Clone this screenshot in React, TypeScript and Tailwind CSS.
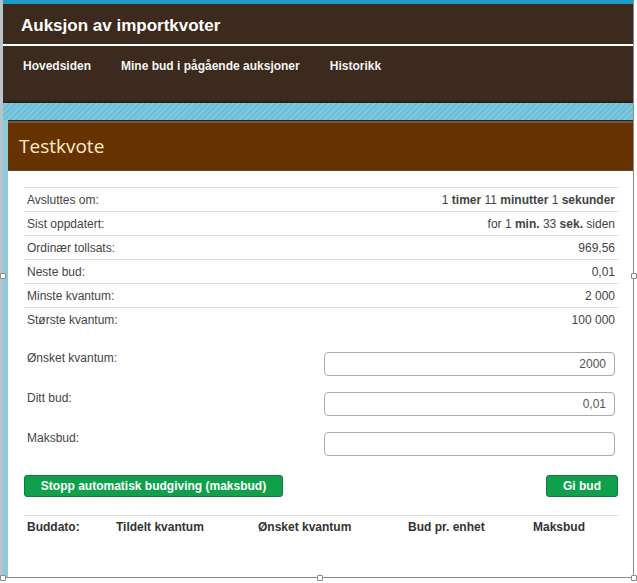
import React from "react";

const rows: { label: string; value: React.ReactNode }[] = [
  {
    label: "Avsluttes om:",
    value: (
      <>
        1 <b>timer</b> 11 <b>minutter</b> 1 <b>sekunder</b>
      </>
    ),
  },
  {
    label: "Sist oppdatert:",
    value: (
      <>
        for 1 <b>min.</b> 33 <b>sek.</b> siden
      </>
    ),
  },
  { label: "Ordinær tollsats:", value: "969,56" },
  { label: "Neste bud:", value: "0,01" },
  { label: "Minste kvantum:", value: "2 000" },
  { label: "Største kvantum:", value: "100 000" },
];

const formRows = [
  { label: "Ønsket kvantum:", value: "2000" },
  { label: "Ditt bud:", value: "0,01" },
  { label: "Maksbud:", value: "" },
];

function Handle({ cls }: { cls: string }) {
  return <div className={`absolute w-[6px] h-[6px] bg-white border border-[#8a8a8a] rounded-[1px] ${cls}`} />;
}

export default function App() {
  return (
    <div className="relative w-[637px] h-[583px] bg-white overflow-hidden font-['Liberation_Sans',Arial,sans-serif] text-[#333]">
      <div className="w-[634px] h-[578px] border-r border-b border-[#8c8c8c] border-l-[3px] border-l-[#b9c4c9] flex flex-col">
        {/* Header */}
        <div className="bg-[#3b2a1d] border-t-[4px] border-t-[#1d9dc6]">
          <div className="h-[42px] flex items-center pl-[18px] pt-[4px] border-b-2 border-white">
            <span className="text-white font-bold text-[17px]">Auksjon av importkvoter</span>
          </div>
          <div className="h-[55px] flex items-start pt-[11px] pl-[20px] gap-[30px] text-[12px] font-bold text-[#f4f4f4]">
            <span>Hovedsiden</span>
            <span>Mine bud i pågående auksjoner</span>
            <span>Historikk</span>
          </div>
        </div>
        {/* Striped band */}
        <div className="h-[2px] bg-[#2a2018]" />
        <div className="h-[17px] bg-[repeating-linear-gradient(135deg,#6cbdd6_0px,#6cbdd6_2px,#80c8de_2px,#80c8de_4px)]" />
        {/* Body */}
        <div className="flex-1 flex bg-[linear-gradient(90deg,#8cc9dc,#c6e4ee)]">
          <div className="w-[5px]" />
          <div className="flex-1 flex flex-col">
            <div className="h-[51px] bg-[#663300] border-t border-t-[#2e2218] shadow-[inset_0_2px_0_#6e5545] border-b border-b-[#5a4535] flex items-center pl-[11px] pt-[1px]">
              <span className="font-['Open_Sans',sans-serif] text-[19px] text-[#fdebd0]">Testkvote</span>
            </div>
            <div className="flex-1 bg-white pl-[16px] pr-[15px] pt-[16px]">
              {/* Info table */}
              <div className="flex flex-col text-[12px] text-[#444]">
                {rows.map((r) => (
                  <div
                    key={r.label}
                    className="h-[24px] flex items-center justify-between pl-[3px] pr-[3px] border-t border-[#dcdcdc]"
                  >
                    <span>{r.label}</span>
                    <span>{r.value}</span>
                  </div>
                ))}
              </div>
              {/* Form */}
              <div className="mt-[21px] flex flex-col gap-[16px] text-[12px] text-[#444]">
                {formRows.map((f) => (
                  <div key={f.label} className="flex h-[24px]">
                    <div className="w-[300px] pl-[3px] leading-[14px] -mt-[1px]">{f.label}</div>
                    <div className="w-[291px] h-[24px] border border-[#a9a9a9] rounded-[4px] flex items-center justify-end pr-[8px] text-[12px] text-[#555]">
                      {f.value}
                    </div>
                  </div>
                ))}
              </div>
              {/* Buttons */}
              <div className="mt-[19px] flex justify-between">
                <div className="w-[259px] h-[22px] bg-[#10a04c] border border-[#0b7d3b] rounded-[3px] flex items-center justify-center text-white font-bold text-[12px]">
                  Stopp automatisk budgiving (maksbud)
                </div>
                <div className="w-[72px] h-[22px] bg-[#10a04c] border border-[#0b7d3b] rounded-[3px] flex items-center justify-center text-white font-bold text-[12px]">
                  Gi bud
                </div>
              </div>
              {/* Bid header */}
              <div className="mt-[18px] border-t border-[#dcdcdc] grid grid-cols-[89px_142px_150px_125px_1fr] h-[22px] items-center text-[12px] font-bold text-[#333]">
                <span className="pl-[3px]">Buddato:</span>
                <span className="pl-[3px]">Tildelt kvantum</span>
                <span className="pl-[3px]">Ønsket kvantum</span>
                <span className="pl-[3px]">Bud pr. enhet</span>
                <span className="pl-[3px]">Maksbud</span>
              </div>
            </div>
          </div>
        </div>
      </div>
      <Handle cls="left-0 top-[273px]" />
      <Handle cls="left-[631px] top-[273px]" />
      <Handle cls="left-0 top-[575px]" />
      <Handle cls="left-[317px] top-[575px]" />
      <Handle cls="left-[631px] top-[575px]" />
    </div>
  );
}
